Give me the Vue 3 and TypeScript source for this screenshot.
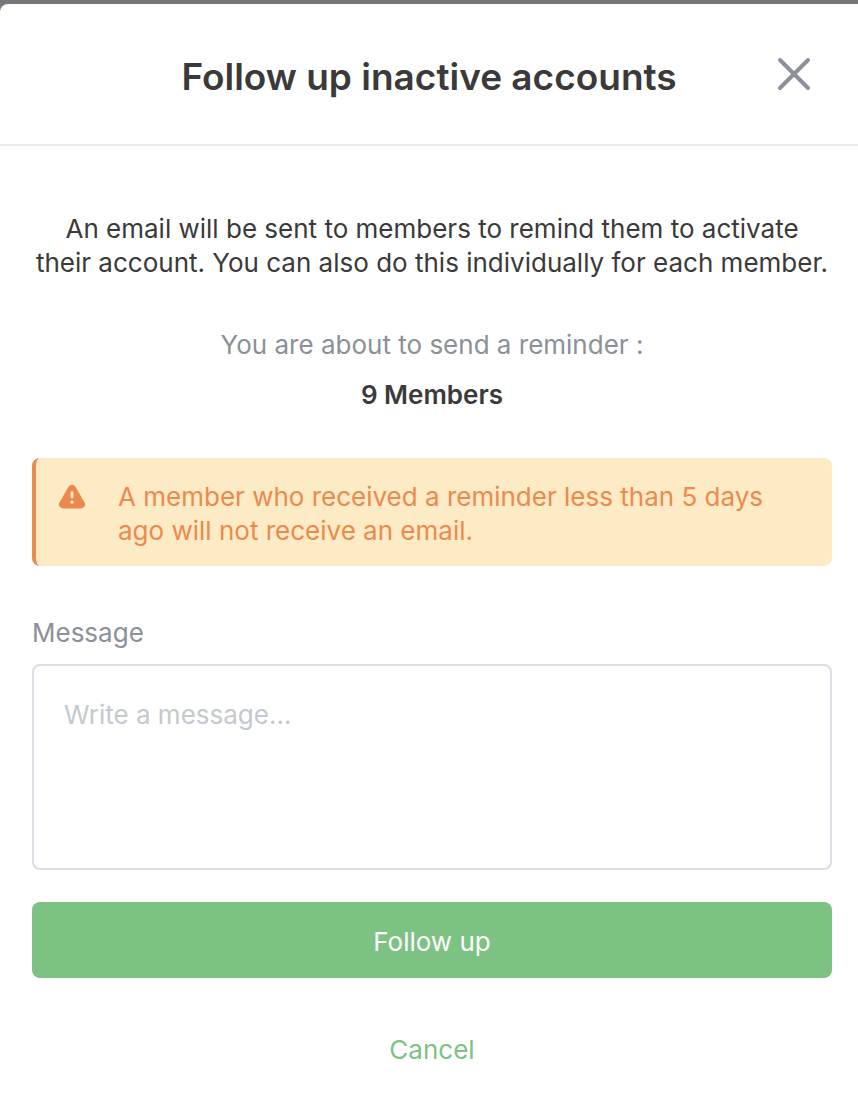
<script setup lang="ts">
import { ref } from 'vue'

const memberCount = ref(9)
const message = ref('')
const open = ref(true)

function close(): void {
  open.value = false
}
</script>

<template>
  <div class="backdrop">
    <section v-if="open" class="modal" role="dialog" aria-modal="true" aria-labelledby="modal-title">
      <header class="header">
        <h1 id="modal-title" class="title">Follow up inactive accounts</h1>
        <button class="close" type="button" aria-label="Close" @click="close">
          <svg viewBox="0 0 36 36" width="36" height="36" aria-hidden="true">
            <path d="M4 4 32 32M32 4 4 32" fill="none" stroke="currentColor" stroke-width="4" stroke-linecap="round" />
          </svg>
        </button>
      </header>

      <form class="body" @submit.prevent="close">
        <p class="intro">
          An email will be sent to members to remind them to activate<br />
          their account. You can also do this individually for each member.
        </p>
        <p class="about">You are about to send a reminder :</p>
        <p class="count">{{ memberCount }} Members</p>

        <div class="alert" role="note">
          <svg class="alert-icon" viewBox="0 0 28 26" width="28" height="26" aria-hidden="true">
            <path d="M10.6 2.6a4 4 0 0 1 6.8 0l9 15.6a4 4 0 0 1-3.5 6.2H5.1a4 4 0 0 1-3.5-6.2z" fill="currentColor" />
            <path d="M14 8.6v4.4" fill="none" stroke="#fcebc5" stroke-width="2.8" stroke-linecap="round" />
            <circle cx="14" cy="18.2" r="1.6" fill="#fcebc5" />
          </svg>
          <p class="alert-text">A member who received a reminder less than 5 days ago will not receive an email.</p>
        </div>

        <label class="label" for="message">Message</label>
        <textarea id="message" v-model="message" class="message" placeholder="Write a message..."></textarea>

        <button class="submit" type="submit">Follow up</button>
        <button class="cancel" type="button" @click="close">Cancel</button>
      </form>
    </section>
  </div>
</template>

<style>
body {
  margin: 0;
  background: #757679;
}
</style>

<style scoped>
.backdrop {
  box-sizing: border-box;
  min-height: 100vh;
  padding-top: 4px;
  display: flex;
  background: #757679;
  font-family: Inter, "Liberation Sans", sans-serif;
  font-size: 26px;
  line-height: 34px;
  color: #3a3a3a;
}

.modal {
  flex: 1;
  min-width: 0;
  background: #fff;
  border-radius: 8px 0 0 0;
}

.header {
  display: grid;
  grid-template-columns: 36px 1fr 36px;
  align-items: start;
  padding: 48px 46px 42px;
  border-bottom: 2px solid #ecedf2;
}

.title {
  grid-column: 2;
  margin: 0;
  font-size: 37px;
  font-weight: 600;
  line-height: 50px;
  text-align: center;
}

.close {
  display: flex;
  margin-top: 4px;
  padding: 0;
  border: 0;
  background: none;
  color: #8b919b;
  cursor: pointer;
}

.body {
  display: flex;
  flex-direction: column;
  padding: 66px 26px 32px 32px;
}

p {
  margin: 0;
}

.intro,
.about,
.count {
  text-align: center;
}

.about {
  margin-top: 48px;
  color: #8b9099;
}

.count {
  margin-top: 16px;
  font-weight: 600;
}

.alert {
  display: flex;
  align-items: flex-start;
  gap: 32px;
  margin-top: 46px;
  padding: 22px 22px 18px;
  border-left: 4px solid #ec8a4e;
  border-radius: 8px;
  background: #fcebc5;
  color: #ec8a4e;
}

.alert-icon {
  flex: none;
  margin-top: 4px;
}

.label {
  margin-top: 50px;
  color: #8b9099;
}

.message {
  box-sizing: border-box;
  height: 206px;
  margin: 14px 0 0;
  padding: 32px 30px;
  border: 2px solid #dadde4;
  border-radius: 8px;
  outline: 0;
  resize: none;
  background: #fff;
  color: #3a3a3a;
  font: inherit;
}

.message::placeholder {
  color: #c4c8d0;
  opacity: 1;
}

.submit,
.cancel {
  border: 0;
  border-radius: 8px;
  font: inherit;
  cursor: pointer;
}

.submit {
  margin-top: 32px;
  padding: 23px 21px 19px;
  background: #7cc283;
  color: #fff;
}

.cancel {
  align-self: center;
  margin-top: 45px;
  padding: 10px 16px;
  background: none;
  color: #7cc283;
}
</style>
